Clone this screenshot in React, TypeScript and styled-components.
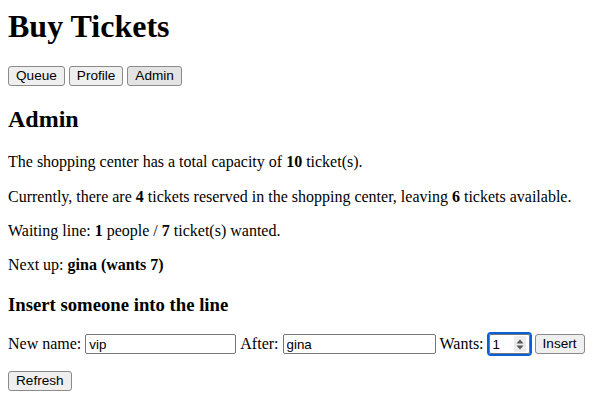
import React, { useState } from 'react';
import styled, { createGlobalStyle } from 'styled-components';

const GlobalStyle = createGlobalStyle`
  body {
    margin: 8px;
    font-family: "Liberation Serif", "Times New Roman", serif;
    font-size: 16px;
    color: #000;
    background: #fff;
  }
`;

const Title = styled.h1`
  font-size: 32px;
  margin: 0 0 21.44px;
`;

const Nav = styled.div`
  display: flex;
  gap: 4px;
`;

const Button = styled.button<{ $hover?: boolean }>`
  font-family: "Liberation Sans", Arial, sans-serif;
  font-size: 13.6px;
  color: #000;
  height: 20px;
  padding: 0 7px;
  border: 1px solid #8a8a8a;
  border-radius: 3px;
  background: ${({ $hover }) => ($hover ? '#e3e3e3' : '#efefef')};
  line-height: 18px;
  vertical-align: middle;
`;

const Section = styled.h2`
  font-size: 24px;
  margin: 19.92px 0;
`;

const Para = styled.p`
  margin: 16px 0;
  line-height: 18.4px;
`;

const Sub = styled.h3`
  font-size: 18.72px;
  margin: 18.72px 0;
`;

const FormRow = styled.p`
  margin: 16px 0;
  display: flex;
  align-items: center;
  white-space: nowrap;
`;

const Label = styled.span`
  margin: 0 4px 0 0;
`;

const TextInput = styled.input<{ $width: number }>`
  box-sizing: border-box;
  font-family: "Liberation Sans", Arial, sans-serif;
  font-size: 13.33px;
  width: ${({ $width }) => $width}px;
  height: 20px;
  padding: 1px 3px;
  border: 1px solid #767676;
  border-radius: 2px;
  margin: 0 4px 0 0;
  outline: none;
`;

const NumberBox = styled.div`
  box-sizing: border-box;
  display: flex;
  align-items: center;
  width: 41px;
  height: 20px;
  margin: 0 5px 0 1px;
  border: 1px solid #767676;
  border-radius: 2px;
  outline: 2px solid #0a5fd6;
  outline-offset: 0;
  font-family: "Liberation Sans", Arial, sans-serif;
  font-size: 13.33px;
  padding-left: 3px;
`;

const NumberText = styled.input`
  font: inherit;
  border: none;
  outline: none;
  width: 18px;
  padding: 0;
  background: transparent;
`;

const Spin = styled.span`
  display: flex;
  align-items: center;
  justify-content: center;
  width: 12px;
  height: 16px;
  margin-left: auto;
  margin-right: 3px;
  background: #ececec;
`;

export default function App() {
  const [name, setName] = useState('vip');
  const [after, setAfter] = useState('gina');
  const [wants, setWants] = useState('1');

  return (
    <>
      <GlobalStyle />
      <Title>Buy Tickets</Title>
      <Nav>
        <Button>Queue</Button>
        <Button>Profile</Button>
        <Button $hover>Admin</Button>
      </Nav>
      <Section>Admin</Section>
      <Para>
        The shopping center has a total capacity of <b>10</b> ticket(s).
      </Para>
      <Para>
        Currently, there are <b>4</b> tickets reserved in the shopping center, leaving <b>6</b> tickets available.
      </Para>
      <Para>
        Waiting line: <b>1</b> people / <b>7</b> ticket(s) wanted.
      </Para>
      <Para>
        Next up: <b>gina (wants 7)</b>
      </Para>
      <Sub>Insert someone into the line</Sub>
      <FormRow>
        <Label>New name:</Label>
        <TextInput $width={151} value={name} onChange={e => setName(e.target.value)} />
        <Label>After:</Label>
        <TextInput $width={153} value={after} onChange={e => setAfter(e.target.value)} />
        <Label>Wants:</Label>
        <NumberBox>
          <NumberText value={wants} onChange={e => setWants(e.target.value)} />
          <Spin>
            <svg width="8" height="11" viewBox="0 0 8 11">
              <path d="M4 0.5 L7.5 4.5 H0.5 Z" fill="#555" />
              <path d="M4 10.5 L7.5 6.5 H0.5 Z" fill="#555" />
            </svg>
          </Spin>
        </NumberBox>
        <Button>Insert</Button>
      </FormRow>
      <Button>Refresh</Button>
    </>
  );
}
